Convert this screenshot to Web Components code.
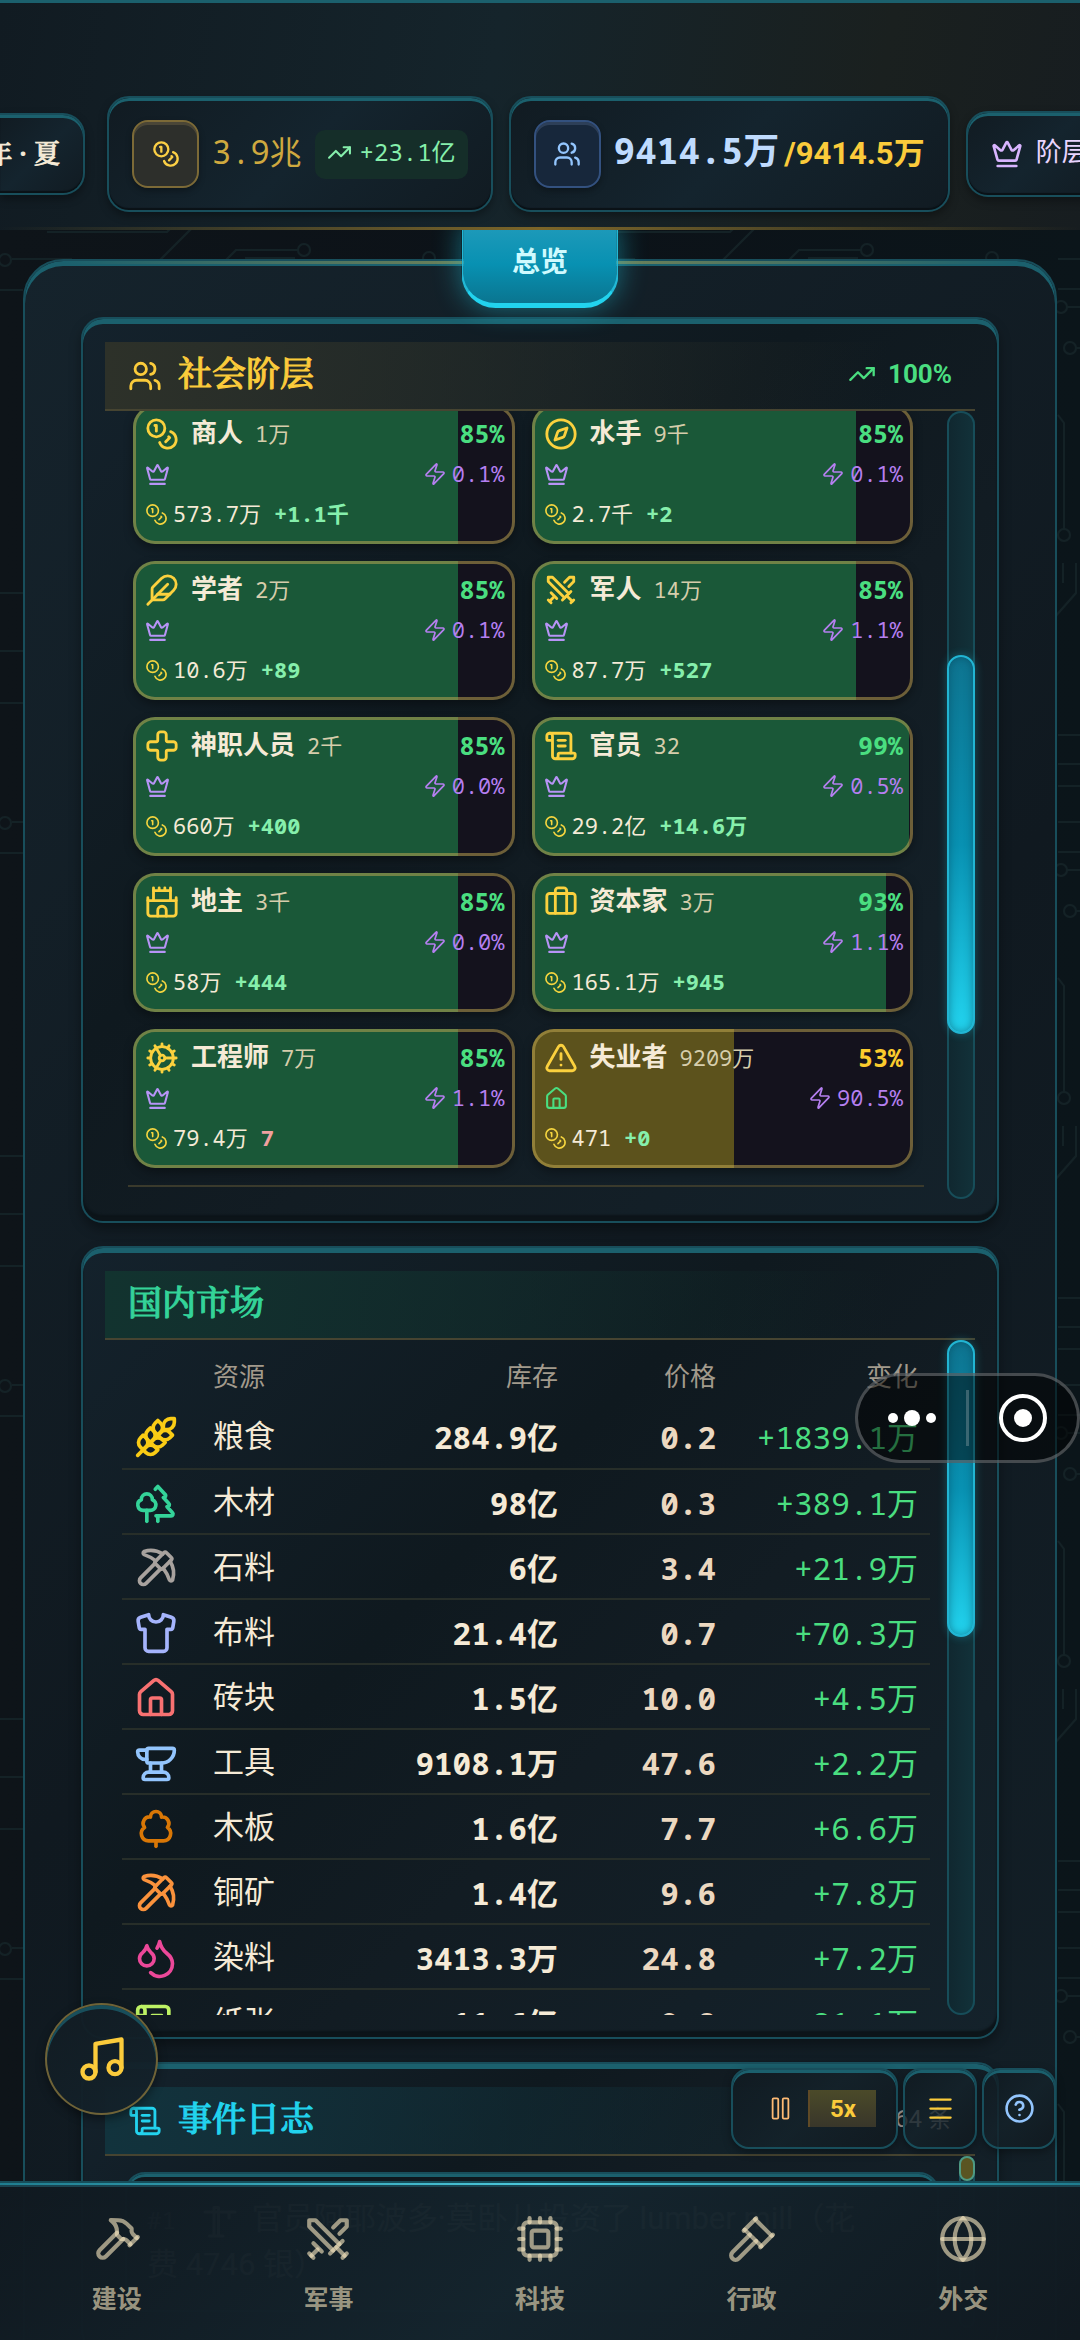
<!DOCTYPE html>
<html lang="zh-CN">
<head>
<meta charset="utf-8">
<meta name="viewport" content="width=device-width, initial-scale=1">
<title>总览</title>
<style>
  html, body {
    height: 100%;
  }

  body {
    margin: 0;
    overflow: hidden;
    background: #0c1218;
    color: #f5ead6;
    --mono: "Droid Sans Mono", "Noto Sans Mono", "Liberation Mono", "Noto Sans CJK SC", monospace;
    --sans: Roboto, "Noto Sans CJK SC", sans-serif;
    --title: "Noto Serif CJK SC", "Noto Sans CJK SC", serif;
    --teal: #184e5b;
    --teal-lit: #1b606d;
    font-family: var(--sans);
    font-size: 26px;
  }
</style>
</head>
<body>
<game-app></game-app>

<script>
const ICONS = {
  coins: '<circle cx="8" cy="8" r="6"/><path d="M18.09 10.37A6 6 0 1 1 10.34 18"/><path d="M7 6h1v4"/><path d="m16.71 13.88.7.71-2.82 2.82"/>',
  users: '<path d="M16 21v-2a4 4 0 0 0-4-4H6a4 4 0 0 0-4 4v2"/><circle cx="9" cy="7" r="4"/><path d="M22 21v-2a4 4 0 0 0-3-3.87"/><path d="M16 3.13a4 4 0 0 1 0 7.75"/>',
  crown: '<path d="M11.562 3.266a.5.5 0 0 1 .876 0L15.39 8.87a1 1 0 0 0 1.516.294L21.183 5.5a.5.5 0 0 1 .798.519l-2.834 10.246a1 1 0 0 1-.956.734H5.81a1 1 0 0 1-.957-.734L2.02 6.02a.5.5 0 0 1 .798-.519l4.276 3.664a1 1 0 0 0 1.516-.294z"/><path d="M5 21h14"/>',
  zap: '<path d="M4 14a1 1 0 0 1-.78-1.63l9.9-10.2a.5.5 0 0 1 .86.46l-1.92 6.02A1 1 0 0 0 13 10h7a1 1 0 0 1 .78 1.63l-9.9 10.2a.5.5 0 0 1-.86-.46l1.92-6.02A1 1 0 0 0 11 14z"/>',
  trend: '<path d="m22 7-8.5 8.5-5-5L2 17"/><path d="M16 7h6v6"/>',
  compass: '<circle cx="12" cy="12" r="10"/><path d="m16.24 7.76-1.804 5.411a2 2 0 0 1-1.265 1.265L7.76 16.24l1.804-5.411a2 2 0 0 1 1.265-1.265z"/>',
  feather: '<path d="M12.67 19a2 2 0 0 0 1.416-.588l6.154-6.172a6 6 0 0 0-8.49-8.49L5.586 9.914A2 2 0 0 0 5 11.328V18a1 1 0 0 0 1 1z"/><path d="M16 8 2 22"/><path d="M17.5 15H9"/>',
  swords: '<path d="M14.5 17.5 3 6V3h3l11.5 11.5"/><path d="m13 19 6-6"/><path d="m16 16 4 4"/><path d="m19 21 2-2"/><path d="M14.5 6.5 18 3h3v3l-3.5 3.5"/><path d="m5 14 4 4"/><path d="m7 17-3 3"/><path d="m3 19 2 2"/>',
  cross: '<path d="M4 9a2 2 0 0 0-2 2v2a2 2 0 0 0 2 2h4a1 1 0 0 1 1 1v4a2 2 0 0 0 2 2h2a2 2 0 0 0 2-2v-4a1 1 0 0 1 1-1h4a2 2 0 0 0 2-2v-2a2 2 0 0 0-2-2h-4a1 1 0 0 1-1-1V4a2 2 0 0 0-2-2h-2a2 2 0 0 0-2 2v4a1 1 0 0 1-1 1z"/>',
  castle: '<path d="M22 20v-9H2v9a2 2 0 0 0 2 2h16a2 2 0 0 0 2-2Z"/><path d="M18 11V4H6v7"/><path d="M15 22v-4a3 3 0 0 0-6 0v4"/><path d="M22 11V9M2 11V9M6 4V2M18 4V2M10 4V2M14 4V2"/>',
  cog: '<path d="M12 20a8 8 0 1 0 0-16 8 8 0 0 0 0 16Z"/><path d="M12 14a2 2 0 1 0 0-4 2 2 0 0 0 0 4Z"/><path d="M12 2v2M12 22v-2m5 .66-1-1.73M11 10.27 7 3.34M20.66 17l-1.73-1M3.34 7l1.73 1M14 12h8M2 12h2M20.66 7l-1.73 1M3.34 17l1.73-1M17 3.34l-1 1.73M11 13.73l-4 6.93"/>',
  scroll: '<path d="M15 12h-5"/><path d="M15 8h-5"/><path d="M19 17V5a2 2 0 0 0-2-2H4"/><path d="M8 21h12a2 2 0 0 0 2-2v-1a1 1 0 0 0-1-1H11a1 1 0 0 0-1 1v1a2 2 0 1 1-4 0V5a2 2 0 1 0-4 0v2a1 1 0 0 0 1 1h3"/>',
  briefcase: '<path d="M16 20V4a2 2 0 0 0-2-2h-4a2 2 0 0 0-2 2v16"/><rect width="20" height="14" x="2" y="6" rx="2"/>',
  alert: '<path d="m21.73 18-8-14a2 2 0 0 0-3.48 0l-8 14A2 2 0 0 0 4 21h16a2 2 0 0 0 1.73-3"/><path d="M12 9v4"/><path d="M12 17h.01"/>',
  home: '<path d="M15 21v-8a1 1 0 0 0-1-1h-4a1 1 0 0 0-1 1v8"/><path d="M3 10a2 2 0 0 1 .709-1.528l7-5.999a2 2 0 0 1 2.582 0l7 5.999A2 2 0 0 1 21 10v9a2 2 0 0 1-2 2H5a2 2 0 0 1-2-2z"/>',
  wheat: '<path d="M2 22 16 8"/><path d="M3.47 12.53 5 11l1.53 1.53a3.5 3.5 0 0 1 0 4.94L5 19l-1.53-1.53a3.5 3.5 0 0 1 0-4.94Z"/><path d="M7.47 8.53 9 7l1.53 1.53a3.5 3.5 0 0 1 0 4.94L9 15l-1.53-1.53a3.5 3.5 0 0 1 0-4.94Z"/><path d="M11.47 4.53 13 3l1.53 1.53a3.5 3.5 0 0 1 0 4.94L13 11l-1.53-1.53a3.5 3.5 0 0 1 0-4.94Z"/><path d="M20 2h2v2a4 4 0 0 1-4 4h-2V6a4 4 0 0 1 4-4Z"/><path d="M11.47 17.47 13 19l-1.53 1.53a3.5 3.5 0 0 1-4.94 0L5 19l1.53-1.53a3.5 3.5 0 0 1 4.94 0Z"/><path d="M15.47 13.47 17 15l-1.53 1.53a3.5 3.5 0 0 1-4.94 0L9 15l1.53-1.53a3.5 3.5 0 0 1 4.94 0Z"/><path d="M19.47 9.47 21 11l-1.53 1.53a3.5 3.5 0 0 1-4.94 0L13 11l1.53-1.53a3.5 3.5 0 0 1 4.94 0Z"/>',
  trees: '<path d="M10 10v.2A3 3 0 0 1 8.9 16H5a3 3 0 0 1-1-5.8V10a3 3 0 0 1 6 0Z"/><path d="M7 16v6"/><path d="M13 19v3"/><path d="M12 19h8.3a1 1 0 0 0 .7-1.7L18 14h.3a1 1 0 0 0 .7-1.7L16 9h.2a1 1 0 0 0 .8-1.7L13 3l-1.4 1.5"/>',
  pickaxe: '<path d="m14.5 12.5-7.9 7.9a1 1 0 1 1-3-3l7.9-7.9"/><path d="M15.686 4.314A12.5 12.5 0 0 0 5.461 2.958 1 1 0 0 0 5.58 4.71a22 22 0 0 1 6.318 3.393"/><path d="M17.7 3.7a1 1 0 0 0-1.4 0l-4.6 4.6a1 1 0 0 0 0 1.4l2.6 2.6a1 1 0 0 0 1.4 0l4.6-4.6a1 1 0 0 0 0-1.4z"/><path d="M19.686 8.314a12.501 12.501 0 0 1 1.356 10.225 1 1 0 0 1-1.751-.119 22 22 0 0 0-3.393-6.319"/>',
  shirt: '<path d="M20.38 3.46 16 2a4 4 0 0 1-8 0L3.62 3.46a2 2 0 0 0-1.34 2.23l.58 3.47a1 1 0 0 0 .99.84H6v10c0 1.1.9 2 2 2h8a2 2 0 0 0 2-2V10h2.15a1 1 0 0 0 .99-.84l.58-3.47a2 2 0 0 0-1.34-2.23z"/>',
  anvil: '<path d="M7 10H6a4 4 0 0 1-4-4 1 1 0 0 1 1-1h4"/><path d="M7 5a1 1 0 0 1 1-1h13a1 1 0 0 1 1 1 7 7 0 0 1-7 7H8a1 1 0 0 1-1-1z"/><path d="M9 12v5"/><path d="M15 12v5"/><path d="M5 20a3 3 0 0 1 3-3h8a3 3 0 0 1 3 3 1 1 0 0 1-1 1H6a1 1 0 0 1-1-1"/>',
  tree: '<path d="M8 19a4 4 0 0 1-2.24-7.32A3.5 3.5 0 0 1 9 6.03V6a3 3 0 1 1 6 0v.04a3.5 3.5 0 0 1 3.24 5.65A4 4 0 0 1 16 19Z"/><path d="M12 19v3"/>',
  droplets: '<path d="M7 16.3c2.2 0 4-1.83 4-4.05 0-1.16-.57-2.26-1.71-3.19S7.29 6.75 7 5.3c-.29 1.45-1.14 2.84-2.29 3.76S3 11.1 3 12.25c0 2.22 1.8 4.05 4 4.05z"/><path d="M12.56 6.6A10.97 10.97 0 0 0 14 3.02c.5 2.5 2 4.9 4 6.5s3 3.5 3 5.5a6.98 6.98 0 0 1-11.91 4.97"/>',
  music: '<path d="M9 18V5l12-2v13"/><circle cx="6" cy="18" r="3"/><circle cx="18" cy="16" r="3"/>',
  pause: '<rect x="14" y="3" width="5" height="18" rx="1"/><rect x="5" y="3" width="5" height="18" rx="1"/>',
  menu: '<path d="M3 4h18M3 12h18M3 20h18"/>',
  help: '<circle cx="12" cy="12" r="10"/><path d="M9.09 9a3 3 0 0 1 5.83 1c0 2-3 3-3 3"/><path d="M12 17h.01"/>',
  hammer: '<path d="m15 12-8.373 8.373a1 1 0 1 1-3-3L12 9"/><path d="m18 15 4-4"/><path d="m21.5 11.5-1.914-1.914A2 2 0 0 1 19 8.172V7l-2.26-2.26a6 6 0 0 0-4.202-1.756L9 2.96l.92.82A6.18 6.18 0 0 1 12 8.4V10l2 2h1.172a2 2 0 0 1 1.414.586L18.5 14.5"/>',
  cpu: '<path d="M12 20v2"/><path d="M12 2v2"/><path d="M17 20v2"/><path d="M17 2v2"/><path d="M2 12h2"/><path d="M2 17h2"/><path d="M2 7h2"/><path d="M20 12h2"/><path d="M20 17h2"/><path d="M20 7h2"/><path d="M7 20v2"/><path d="M7 2v2"/><rect x="4" y="4" width="16" height="16" rx="2"/><rect x="8" y="8" width="8" height="8" rx="1"/>',
  gavel: '<path d="m14 13-8.381 8.38a1 1 0 0 1-3.001-3l8.384-8.381"/><path d="m16 16 6-6"/><path d="m21.5 10.5-8-8"/><path d="m8 8 6-6"/><path d="m8.5 7.5 8 8"/>',
  globe: '<circle cx="12" cy="12" r="10"/><path d="M12 2a14.5 14.5 0 0 0 0 20 14.5 14.5 0 0 0 0-20"/><path d="M2 12h20"/>',
  crane: '<path d="M8 22V3M11 22V3M2 6h20M8 3h3M18 6v4M5 22h9"/>'
};

class UiIcon extends HTMLElement {
  connectedCallback() {
    const size = this.getAttribute('size') || 34;
    const stroke = this.getAttribute('stroke') || 2;
    const shadow = this.attachShadow({ mode: 'open' });
    shadow.innerHTML = `
      <style>
        :host { display: block; flex: none; width: ${size}px; height: ${size}px; }
        svg { display: block; width: 100%; height: 100%; }
      </style>
      <svg viewBox="0 0 24 24" fill="none" stroke="currentColor" stroke-width="${stroke}"
        stroke-linecap="round" stroke-linejoin="round" aria-hidden="true">${ICONS[this.getAttribute('name')]}</svg>`;
  }
}
customElements.define('ui-icon', UiIcon);

// faint circuit traces behind everything
class CircuitBackdrop extends HTMLElement {
  connectedCallback() {
    const shadow = this.attachShadow({ mode: 'open' });
    shadow.innerHTML = `
      <style>
        :host { position: absolute; inset: 0; z-index: -1; background: linear-gradient(90deg, #0e1419, #0c1218 50%, #0b151a); }
        svg { display: block; width: 100%; height: 100%; }
      </style>
      <svg aria-hidden="true">
        <defs>
          <pattern id="traces" width="563" height="563" patternUnits="userSpaceOnUse">
            <g fill="none" stroke="#142226" stroke-width="2">
              <path d="M47 232h120l5-5M192 228l-32 32M226 260l10-10h62M245 258h50M12 259h60M0 290h23"/>
              <circle cx="304" cy="250" r="6"/><circle cx="429" cy="258" r="6"/><circle cx="5" cy="260" r="6"/>
              <path d="M495 172h68M495 201h68M495 223h68M495 259h68M495 289h68M504 307h59M513 348h50M513 0v30l-22 25M500 0v20M495 415l6 8v106"/>
              <circle cx="498" cy="307" r="6"/><circle cx="507" cy="348" r="6"/><circle cx="501" cy="535" r="6"/>
              <path d="M0 30h24M0 88h24M0 140h24"/>
            </g>
          </pattern>
        </defs>
        <rect width="100%" height="100%" fill="url(#traces)"/>
      </svg>`;
  }
}
customElements.define('circuit-backdrop', CircuitBackdrop);

class StatusChip extends HTMLElement {
  connectedCallback() {
    const shadow = this.attachShadow({ mode: 'open' });
    shadow.innerHTML = `
      <style>
        :host {
          display: flex; flex: none; align-items: center; box-sizing: border-box;
          gap: 13px; height: 116px; padding: 0 23px; border: 2px solid var(--teal); border-radius: 22px;
          background: linear-gradient(135deg, #111b22, #14242e 50%, #111b22);
          box-shadow: inset 0 3px 0 var(--teal-lit), inset 0 -2px 1px #0a1116, 0 4px 8px rgba(0, 0, 0, .35);
        }
        :host([small]) { height: 86px; gap: 13px; }
        :host([cut]) {
          width: 85px; height: 82px; overflow: hidden; justify-content: flex-end; margin-right: 6px;
          border-left: 0; border-radius: 0 22px 22px 0; white-space: nowrap;
          font: 500 26px/34px var(--title); padding-bottom: 4px; -webkit-text-stroke: 1px currentColor;
        }
      </style>
      <slot></slot>`;
  }
}
customElements.define('status-chip', StatusChip);

class StatusBar extends HTMLElement {
  connectedCallback() {
    const shadow = this.attachShadow({ mode: 'open' });
    shadow.innerHTML = `
      <style>
        :host {
          display: flex; align-items: center; gap: 16px; position: relative; z-index: 2; box-sizing: border-box;
          height: 230px; padding-top: 75px; overflow: hidden; border-top: 3px solid var(--teal-lit);
          background: linear-gradient(100deg, #111b22, #15242b 45%, #1a201f 80%, #171d20);
        }
        :host::after {
          content: ""; position: absolute; left: 0; right: 0; bottom: 0; height: 3px;
          background: linear-gradient(90deg, transparent, #7c6629 50%, transparent);
        }
        .box {
          display: grid; place-items: center; box-sizing: border-box; width: 67px; height: 68px; border-radius: 16px;
          border: 2px solid #7c6a37; color: #fbcf45; background: #2d2f2b;
          box-shadow: inset 0 3px 0 #4a4637, 0 3px 6px rgba(0, 0, 0, .3);
        }
        .box.blue {
          border-color: #33517f; color: #93c5fd; background: #17273b;
          box-shadow: inset 0 3px 0 #2d3f58, 0 3px 6px rgba(0, 0, 0, .3);
        }
        .money { font: 32px/40px var(--mono); color: #cfa93f; padding-bottom: 4px; }
        .rate {
          display: flex; align-items: center; gap: 8px; box-sizing: border-box; height: 49px; padding: 0 12px 4px; border-radius: 10px;
          background: #152e29; color: #86efac; font: 24px/30px var(--mono);
        }
        .people {
          display: flex; align-items: baseline; gap: 5px; padding-bottom: 4px;
          font: 700 36px/40px var(--mono); color: #bfdbfe;
        }
        .cap { font: 700 31px/40px var(--sans); color: #fbcb3b; }
        .purple { color: #d8b4fe; }
        .strata { color: #e9d5ff; white-space: nowrap; line-height: 34px; padding-bottom: 4px; }
      </style>
      <status-chip cut><span>年 · 夏</span></status-chip>
      <status-chip>
        <span class="box"><ui-icon name="coins" size="28"></ui-icon></span>
        <span class="money">3.9兆</span>
        <span class="rate"><ui-icon name="trend" size="25"></ui-icon><span>+23.1亿</span></span>
      </status-chip>
      <status-chip>
        <span class="box blue"><ui-icon name="users" size="28"></ui-icon></span>
        <span class="people"><span>9414.5万</span><span class="cap">/9414.5万</span></span>
      </status-chip>
      <status-chip small>
        <ui-icon class="purple" name="crown" size="32"></ui-icon>
        <span class="strata">阶层</span>
      </status-chip>`;
  }
}
customElements.define('status-bar', StatusBar);

class MainPanel extends HTMLElement {
  connectedCallback() {
    const shadow = this.attachShadow({ mode: 'open' });
    shadow.innerHTML = `
      <style>
        :host {
          display: flex; flex-direction: column; gap: 23px; position: relative; margin: 29px 23px 0; padding: 56px;
          border: 2px solid var(--teal); border-radius: 40px;
          background: linear-gradient(135deg, #15232c, #101920 50%, #132028);
          box-shadow: inset 0 5px 0 var(--teal-lit);
        }
        :host::before {
          content: ""; position: absolute; left: 40px; right: 40px; top: 0; height: 3px;
          background: linear-gradient(90deg, transparent, #7d8755 50%, transparent);
        }
        button {
          position: absolute; top: -38px; left: 50%; transform: translateX(-50%);
          width: 157px; height: 85px; padding: 0 0 8px; border: 2px solid #22b8d6; border-bottom: 5px solid #22d3ee;
          border-radius: 0 0 34px 34px; background: linear-gradient(#1f9aba, #0891b2 50%, #0a7590);
          box-shadow: 0 0 28px rgba(34, 211, 238, .45);
          color: #cffafe; font: 700 28px var(--sans);
        }
      </style>
      <button type="button">总览</button>
      <slot></slot>`;
  }
}
customElements.define('main-panel', MainPanel);

class SectionCard extends HTMLElement {
  connectedCallback() {
    const shadow = this.attachShadow({ mode: 'open' });
    shadow.innerHTML = `
      <style>
        :host {
          display: block; padding: 23px 22px 22px; border: 2px solid var(--teal); border-radius: 22px;
          background: linear-gradient(135deg, #14222c, #0f191f 40%, #121c23 60%, #14222b);
          box-shadow: inset 0 5px 0 var(--teal-lit), inset 0 -6px 2px #0c1419, 0 6px 12px rgba(0, 0, 0, .35);
        }
        header {
          display: flex; align-items: center; gap: 16px; box-sizing: border-box; height: 69px; padding: 0 23px;
          border-bottom: 2px solid #464431; color: var(--accent);
          background: linear-gradient(90deg, var(--wash), transparent 90%);
        }
        h2 {
          margin: 0; flex: 1; padding-bottom: 8px; font: 500 34px/44px var(--title);
          -webkit-text-stroke: 1px currentColor;
        }
      </style>
      <header><slot name="icon"></slot><h2><slot name="title"></slot></h2><slot name="extra"></slot></header>
      <slot></slot>`;
  }
}
customElements.define('section-card', SectionCard);

// clipped body with a drawn scrollbar; "start" and "length" are percents of the track
class ScrollBody extends HTMLElement {
  connectedCallback() {
    const shadow = this.attachShadow({ mode: 'open' });
    shadow.innerHTML = `
      <style>
        :host { display: grid; grid-template-columns: minmax(0, 1fr) 28px; }
        :host([narrow]) { grid-template-columns: minmax(0, 1fr) 16px; }
        .view { display: flex; flex-direction: column; min-height: 0; overflow: hidden; }
        :host([bottom]) .view { justify-content: flex-end; }
        .track {
          box-sizing: border-box; border-radius: 14px; box-shadow: inset 0 0 0 2px #174d59;
          background: linear-gradient(90deg, #10272f, #12323a);
        }
        .gap { height: ${this.getAttribute('start')}%; }
        .thumb {
          box-sizing: border-box; height: ${this.getAttribute('length')}%;
          border: 2px solid #22b5d3; border-radius: 14px;
          background: linear-gradient(#0e7490, #0891b2 50%, #22d3ee);
          box-shadow: inset 0 0 8px rgba(6, 60, 80, .5), 0 0 10px rgba(34, 211, 238, .3);
        }
        :host([narrow]) .thumb { height: 25px; border-color: #4f9a83; border-radius: 8px; background: #5a5522; box-shadow: none; }
      </style>
      <div class="view"><slot></slot></div>
      <div class="track"><div class="gap"></div><div class="thumb"></div></div>`;
  }
}
customElements.define('scroll-body', ScrollBody);

class StratumCard extends HTMLElement {
  connectedCallback() {
    const a = name => this.getAttribute(name);
    const low = Number(a('mood')) < 60;
    const shadow = this.attachShadow({ mode: 'open' });
    shadow.innerHTML = `
      <style>
        :host {
          display: grid; grid-template-rows: repeat(3, 40px); box-sizing: border-box; min-width: 0;
          padding: 6px 7px 7px 9px; border: 3px solid rgba(198, 172, 84, .5); border-radius: 22px;
          background: linear-gradient(90deg, ${low ? '#5c521c' : '#1a5838'} ${a('mood')}%, #14121d ${a('mood')}%) border-box;
          box-shadow: 0 4px 10px rgba(0, 0, 0, .35);
          font: 22px/30px var(--mono); white-space: nowrap;
        }
        div { display: flex; align-items: center; }
        span { padding-bottom: 3px; }
        .end { margin-left: auto; }
        .icon { color: #fbd13e; }
        .name { margin: 0 12px; font: 700 26px/30px var(--sans); }
        .count { color: #d6cdab; }
        .mood { font-weight: 700; font-size: 25px; color: ${low ? '#fbcb2d' : '#4ade80'}; }
        .rank { color: ${low ? '#4ade80' : '#b794f6'}; }
        .power { display: flex; align-items: center; gap: 5px; padding: 0; color: #b57ff0; }
        .coin { color: #f5d53f; margin-right: 5px; }
        .gain { margin-left: 13px; font-weight: 700; color: ${a('gain').startsWith('+') ? '#86efac' : '#f0a0a0'}; }
      </style>
      <div>
        <ui-icon class="icon" name="${a('icon')}" size="34"></ui-icon>
        <span class="name">${a('name')}</span>
        <span class="count">${a('count')}</span>
        <span class="mood end">${a('mood')}%</span>
      </div>
      <div>
        <ui-icon class="rank" name="${low ? 'home' : 'crown'}" size="25"></ui-icon>
        <span class="power end"><ui-icon name="zap" size="24" stroke="1.7"></ui-icon><span>${a('power')}</span></span>
      </div>
      <div>
        <ui-icon class="coin" name="coins" size="23" stroke="1.7"></ui-icon>
        <span>${a('wealth')}</span>
        <span class="gain">${a('gain')}</span>
      </div>`;
  }
}
customElements.define('stratum-card', StratumCard);

const STRATA = [
  ['coins', '商人', '1万', 85, '0.1%', '573.7万', '+1.1千'],
  ['compass', '水手', '9千', 85, '0.1%', '2.7千', '+2'],
  ['feather', '学者', '2万', 85, '0.1%', '10.6万', '+89'],
  ['swords', '军人', '14万', 85, '1.1%', '87.7万', '+527'],
  ['cross', '神职人员', '2千', 85, '0.0%', '660万', '+400'],
  ['scroll', '官员', '32', 99, '0.5%', '29.2亿', '+14.6万'],
  ['castle', '地主', '3千', 85, '0.0%', '58万', '+444'],
  ['briefcase', '资本家', '3万', 93, '1.1%', '165.1万', '+945'],
  ['cog', '工程师', '7万', 85, '1.1%', '79.4万', '7'],
  ['alert', '失业者', '9209万', 53, '90.5%', '471', '+0']
];

class StrataList extends HTMLElement {
  connectedCallback() {
    const shadow = this.attachShadow({ mode: 'open' });
    shadow.innerHTML = `
      <style>
        :host { display: block; padding: 0 23px 12px; }
        .grid {
          display: grid; grid-template-columns: 1fr 1fr; gap: 17px; padding: 0 11px 17px 5px;
          border-bottom: 2px solid #3a3a2c;
        }
      </style>
      <div class="grid">${STRATA.map(s => `
        <stratum-card icon="${s[0]}" name="${s[1]}" count="${s[2]}" mood="${s[3]}"
          power="${s[4]}" wealth="${s[5]}" gain="${s[6]}"></stratum-card>`).join('')}
      </div>`;
  }
}
customElements.define('strata-list', StrataList);

const GOODS = [
  ['wheat', '#facc15', '粮食', '284.9亿', '0.2', '+1839.1万'],
  ['trees', '#34d399', '木材', '98亿', '0.3', '+389.1万'],
  ['pickaxe', '#a8a29e', '石料', '6亿', '3.4', '+21.9万'],
  ['shirt', '#a5b4fc', '布料', '21.4亿', '0.7', '+70.3万'],
  ['home', '#f87171', '砖块', '1.5亿', '10.0', '+4.5万'],
  ['anvil', '#93c5fd', '工具', '9108.1万', '47.6', '+2.2万'],
  ['tree', '#d97706', '木板', '1.6亿', '7.7', '+6.6万'],
  ['pickaxe', '#fb923c', '铜矿', '1.4亿', '9.6', '+7.8万'],
  ['droplets', '#ec4899', '染料', '3413.3万', '24.8', '+7.2万'],
  ['scroll', '#bef264', '纸张', '11.6亿', '9.8', '+21.1万']
];

class MarketTable extends HTMLElement {
  connectedCallback() {
    const shadow = this.attachShadow({ mode: 'open' });
    shadow.innerHTML = `
      <style>
        :host { display: block; padding: 0 17px; }
        table { width: 100%; table-layout: fixed; border-collapse: collapse; font-size: 31px; }
        th { height: 60px; padding: 4px 12px 0; font: 26px var(--sans); color: #a29a8c; text-align: right; }
        td {
          box-sizing: border-box; height: 65px; padding: 2px 12px 0; border-bottom: 2px solid #272e29;
          text-align: right; font-family: var(--mono); line-height: 40px;
        }
        th:nth-child(2), td:nth-child(2) { text-align: left; font-family: var(--sans); }
        td:nth-child(3), td:nth-child(4) { font-weight: 700; }
        td:nth-child(4) { color: #ecd8c0; }
        td:nth-child(5) { color: #4ade80; }
        .c-icon { width: 79px; }
        .c-stock { width: 190px; }
        .c-price { width: 158px; }
        .c-change { width: 202px; }
      </style>
      <table>
        <colgroup><col class="c-icon"><col><col class="c-stock"><col class="c-price"><col class="c-change"></colgroup>
        <thead><tr><th></th><th>资源</th><th>库存</th><th>价格</th><th>变化</th></tr></thead>
        <tbody>${GOODS.map(g => `
          <tr>
            <td><ui-icon name="${g[0]}" size="44" style="color:${g[1]}"></ui-icon></td>
            <td>${g[2]}</td><td>${g[3]}</td><td>${g[4]}</td><td>${g[5]}</td>
          </tr>`).join('')}
        </tbody>
      </table>`;
  }
}
customElements.define('market-table', MarketTable);

class EventLog extends HTMLElement {
  connectedCallback() {
    const shadow = this.attachShadow({ mode: 'open' });
    shadow.innerHTML = `
      <style>
        :host { display: block; padding: 16px 20px; }
        article {
          padding: 22px 60px 22px 20px; border: 2px solid var(--teal); border-radius: 20px;
          background: #0f181e; box-shadow: inset 0 3px 0 var(--teal-lit); font-size: 31px; line-height: 46px;
        }
        .no { font: 24px/30px var(--mono); color: #a8a29e; margin-right: 26px; }
        ui-icon { display: inline-block; vertical-align: middle; margin-right: 14px; }
      </style>
      <article><span class="no">#1</span><ui-icon name="crane" size="36"></ui-icon>官员阿耶波多·莫卧儿投资了 lumber mill（花费 4746 银）</article>`;
  }
}
customElements.define('event-log', EventLog);

class MusicButton extends HTMLElement {
  connectedCallback() {
    const shadow = this.attachShadow({ mode: 'open' });
    shadow.innerHTML = `
      <style>
        :host { position: absolute; left: 45px; bottom: 225px; z-index: 3; }
        button {
          display: grid; place-items: center; width: 113px; height: 112px; padding: 0;
          border: 2px solid #6f6337; border-radius: 50%; color: #fbcb3b;
          background: linear-gradient(135deg, rgba(18, 28, 35, .96), rgba(19, 34, 43, .96));
          box-shadow: inset 0 4px 0 #184e5b, 0 4px 10px rgba(0, 0, 0, .4);
        }
      </style>
      <button type="button" aria-label="音乐"><ui-icon name="music" size="52"></ui-icon></button>`;
  }
}
customElements.define('music-button', MusicButton);

class SpeedControls extends HTMLElement {
  connectedCallback() {
    const shadow = this.attachShadow({ mode: 'open' });
    shadow.innerHTML = `
      <style>
        :host { display: flex; gap: 5px; position: absolute; right: 24px; bottom: 191px; z-index: 3; }
        .box {
          display: flex; align-items: center; justify-content: center; box-sizing: border-box; width: 74px; height: 81px; padding: 0;
          border: 2px solid var(--teal); border-radius: 18px; color: #fbcb3b;
          background: linear-gradient(135deg, rgba(16, 26, 33, .82), rgba(20, 34, 42, .82), rgba(16, 24, 30, .82));
          box-shadow: inset 0 3px 0 var(--teal-lit), 0 3px 8px rgba(0, 0, 0, .35);
        }
        .speed { width: 167px; justify-content: flex-end; gap: 14px; padding-right: 20px; }
        .speed button { border: 0; padding: 0; background: none; color: #fdba74; }
        .speed .rate {
          width: 68px; height: 37px; border-left: 2px solid #5f4a26; color: #fbcb3b; font: 700 24px var(--sans);
          background: linear-gradient(#4b4a29, #38362a);
        }
        .help { color: #93c5fd; }
      </style>
      <div class="box speed">
        <button type="button" aria-label="暂停"><ui-icon name="pause" size="27" stroke="1.6"></ui-icon></button>
        <button type="button" class="rate">5x</button>
      </div>
      <button type="button" class="box" aria-label="菜单"><ui-icon name="menu" size="27" stroke="2"></ui-icon></button>
      <button type="button" class="box help" aria-label="帮助"><ui-icon name="help" size="31"></ui-icon></button>`;
  }
}
customElements.define('speed-controls', SpeedControls);

class HostCapsule extends HTMLElement {
  connectedCallback() {
    const shadow = this.attachShadow({ mode: 'open' });
    shadow.innerHTML = `
      <style>
        :host {
          display: flex; align-items: center; box-sizing: border-box; position: absolute; right: 0; top: 1373px; z-index: 4;
          width: 225px; height: 90px; border: 3px solid rgba(160, 165, 170, .4); border-radius: 45px; background: rgba(0, 0, 0, .5);
        }
        button { display: grid; place-items: center; flex: 1; height: 100%; padding: 0; border: 0; background: none; color: #fff; }
        i { width: 3px; height: 56px; background: rgba(160, 175, 180, .35); }
      </style>
      <button type="button" aria-label="更多">
        <svg width="48" height="18" fill="currentColor"><circle cx="5" cy="9" r="5"/><circle cx="24" cy="9" r="8"/><circle cx="43" cy="9" r="5"/></svg>
      </button>
      <i></i>
      <button type="button" aria-label="关闭">
        <svg width="50" height="50"><circle cx="25" cy="25" r="22" fill="none" stroke="currentColor" stroke-width="4"/><circle cx="25" cy="25" r="9" fill="currentColor"/></svg>
      </button>`;
  }
}
customElements.define('host-capsule', HostCapsule);

class BottomNav extends HTMLElement {
  connectedCallback() {
    const items = [['hammer', '建设'], ['swords', '军事'], ['cpu', '科技'], ['gavel', '行政'], ['globe', '外交']];
    const shadow = this.attachShadow({ mode: 'open' });
    shadow.innerHTML = `
      <style>
        :host {
          position: absolute; left: 0; right: 0; bottom: 0; z-index: 2; height: 159px;
          background: linear-gradient(135deg, rgba(16, 25, 32, .98), rgba(20, 36, 45, .98) 50%, rgba(16, 25, 32, .98));
        }
        :host::before {
          content: ""; display: block; height: 6px; box-sizing: border-box;
          border-top: 2px solid #174d59; border-bottom: 2px solid #1a4450;
          background: linear-gradient(90deg, #1f7d8f, #4cc9dc 50%, #1f7d8f);
        }
        nav { display: flex; padding: 0 11px; }
        a {
          display: flex; flex: 1; flex-direction: column; align-items: center; gap: 17px; padding-top: 27px;
          color: rgba(245, 229, 190, .62); font: 700 25px/37px var(--sans); text-decoration: none;
        }
      </style>
      <nav>${items.map(i => `<a href="#${i[0]}"><ui-icon name="${i[0]}" size="50"></ui-icon><span>${i[1]}</span></a>`).join('')}</nav>`;
  }
}
customElements.define('bottom-nav', BottomNav);

class GameApp extends HTMLElement {
  connectedCallback() {
    const shadow = this.attachShadow({ mode: 'open' });
    shadow.innerHTML = `
      <style>
        :host { display: block; position: relative; z-index: 0; height: 100vh; overflow: hidden; }
        .strata { --accent: #fbcb3b; --wash: #2d3129; }
        .market { --accent: #34d399; --wash: #12332f; }
        .events { --accent: #22d3ee; --wash: #12333d; }
        .strata scroll-body { height: 788px; }
        .market scroll-body { height: 675px; }
        .mood { display: flex; align-items: center; gap: 12px; font-weight: 700; line-height: 30px; padding-bottom: 4px; color: #4ade80; }
        .total { font: 24px/30px var(--sans); padding-bottom: 4px; color: #a8a29e; }
      </style>
      <circuit-backdrop></circuit-backdrop>
      <status-bar></status-bar>
      <main-panel>
        <section-card class="strata">
          <ui-icon slot="icon" name="users" size="34"></ui-icon>
          <span slot="title">社会阶层</span>
          <span slot="extra" class="mood"><ui-icon name="trend" size="28"></ui-icon><span>100%</span></span>
          <scroll-body bottom start="31" length="48"><strata-list></strata-list></scroll-body>
        </section-card>
        <section-card class="market">
          <span slot="title">国内市场</span>
          <scroll-body start="0" length="44"><market-table></market-table></scroll-body>
        </section-card>
        <section-card class="events">
          <ui-icon slot="icon" name="scroll" size="34"></ui-icon>
          <span slot="title">事件日志</span>
          <span slot="extra" class="total">64 条</span>
          <scroll-body narrow start="0" length="20"><event-log></event-log></scroll-body>
        </section-card>
      </main-panel>
      <music-button></music-button>
      <speed-controls></speed-controls>
      <host-capsule></host-capsule>
      <bottom-nav></bottom-nav>`;
  }
}
customElements.define('game-app', GameApp);
</script>
</body>
</html>
